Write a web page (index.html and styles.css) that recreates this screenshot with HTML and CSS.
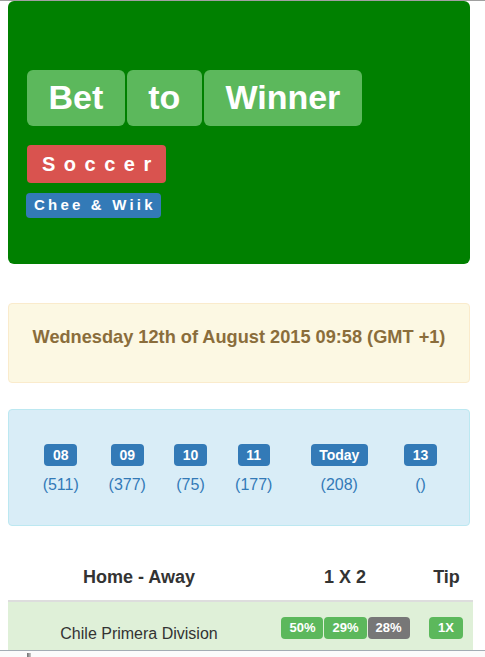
FILE: index.html
```html
<!DOCTYPE html>
<html lang="en">
<head>
  <meta charset="UTF-8" />
  <meta name="viewport" content="width=device-width, initial-scale=1.0"/>
  <title>Bet to Winner - Soccer Tips</title>
  <link rel="stylesheet" href="styles.css">
</head>
<body>
  <div class="page">

    <div class="hero">
      <div class="brand">
        <span class="label label-success brand-word">Bet</span>
        <span class="label label-success brand-word">to</span>
        <span class="label label-success brand-word">Winner</span>
      </div>
      <div><span class="label label-danger sport">Soccer</span></div>
      <div><span class="label label-primary author">Chee &amp; Wiik</span></div>
    </div>

    <div class="alert alert-warning date">Wednesday 12th of August 2015 09:58 (GMT +1)</div>

    <div class="alert alert-info days">
      <table class="day-table">
        <tr>
          <td><span class="label label-primary day">08</span><a href="#" class="count">(511)</a></td>
          <td><span class="label label-primary day">09</span><a href="#" class="count">(377)</a></td>
          <td><span class="label label-primary day">10</span><a href="#" class="count">(75)</a></td>
          <td><span class="label label-primary day">11</span><a href="#" class="count">(177)</a></td>
          <td><span class="label label-primary day">Today</span><a href="#" class="count">(208)</a></td>
          <td><span class="label label-primary day">13</span><a href="#" class="count">()</a></td>
        </tr>
      </table>
    </div>

    <table class="tips">
      <thead>
        <tr>
          <th class="col-match">Home - Away</th>
          <th class="col-odds">1 X 2</th>
          <th class="col-tip">Tip</th>
        </tr>
      </thead>
      <tbody>
        <tr class="success">
          <td class="col-match league">Chile Primera Division</td>
          <td class="col-odds">
            <div class="odds">
              <span class="label label-success pct">50%</span>
              <span class="label label-success pct">29%</span>
              <span class="label label-default pct">28%</span>
            </div>
          </td>
          <td class="col-tip"><span class="label label-success pct">1X</span></td>
        </tr>
      </tbody>
    </table>

  </div>

  <div class="bottombar"><span class="grip"></span></div>
</body>
</html>
```

FILE: styles.css
```css
body {
  margin: 0;
  font-family: "Liberation Sans", Arial, sans-serif;
  font-size: 16px;
  color: #333;
  background: #fff;
  border-top: 1px solid #a0a0a0;
}

.page {
  width: 462px;
  margin-left: 8px;
}

.label {
  display: inline-block;
  font-weight: bold;
  color: #fff;
  line-height: 1;
  border-radius: 4px;
  white-space: nowrap;
}
.label-success { background: #5cb85c; }
.label-danger { background: #d9534f; }
.label-primary { background: #337ab7; }
.label-default { background: #777; }

/* header block */
.hero {
  background: #008000;
  border-radius: 6px;
  height: 263px;
  box-sizing: border-box;
  padding: 69px 19px 0;
}
.brand {
  display: flex;
  gap: 2px;
  margin-bottom: 19px;
}
.brand-word {
  font-size: 34px;
  line-height: 34px;
  padding: 10px 21.5px 12px;
  border-radius: 6px;
}
.sport {
  font-size: 20px;
  line-height: 20px;
  letter-spacing: 8.5px;
  padding: 9px 6px 9px 15px;
  margin-bottom: 10px;
}
.author {
  font-size: 15px;
  line-height: 15px;
  letter-spacing: 3.2px;
  padding: 4px 5px 6px 8px;
  margin-left: -1px;
}

/* alerts */
.alert {
  border: 1px solid transparent;
  border-radius: 4px;
}
.alert-warning {
  background: #fcf8e3;
  border-color: #faebcc;
  color: #8a6d3b;
}
.alert-info {
  background: #d9edf7;
  border-color: #bce8f1;
}
.date {
  margin-top: 39px;
  padding: 23px 0 35px;
  text-align: center;
  font-size: 18.2px;
  font-weight: bold;
  line-height: 20px;
}
.days {
  margin-top: 26px;
  padding: 34px 19px 30px;
}
.day-table {
  width: 100%;
  border-collapse: collapse;
}
.day-table td {
  padding: 0;
  text-align: center;
}
.day {
  font-size: 14px;
  padding: 4px 8.5px;
}
.count {
  display: block;
  margin-top: 9px;
  line-height: 20px;
  color: #337ab7;
  text-decoration: none;
}

/* tips table */
.tips {
  width: 465px;
  margin-top: 33px;
  border-collapse: collapse;
}
.tips th {
  font-size: 18px;
  line-height: 20px;
  padding: 8px 0 13px;
  border-bottom: 2px solid #ddd;
  text-align: center;
}
.tips td {
  vertical-align: top;
  text-align: center;
  padding: 15px 0 11px;
}
.col-match { width: 262px; }
.col-odds { width: 150px; }
.tips tr.success td { background: #dff0d8; }
.tips td.league {
  padding-top: 22px;
  line-height: 20px;
}
.odds {
  display: flex;
  justify-content: center;
  gap: 1px;
  padding-left: 1px;
}
.pct {
  font-size: 13px;
  line-height: 13px;
  padding: 4px 8px 5px;
}
.col-tip .pct {
  padding: 4px 9px 5px;
  margin-left: -1px;
}

.bottombar {
  position: fixed;
  left: 0;
  right: 0;
  bottom: 0;
  height: 6px;
  background: #fbfbfb;
  border-top: 1px solid #a3acb4;
}
.grip {
  display: block;
  width: 4px;
  height: 4px;
  margin: 2px 0 0 27px;
  background: linear-gradient(to right, #707070, #c8c8c8);
}
```
